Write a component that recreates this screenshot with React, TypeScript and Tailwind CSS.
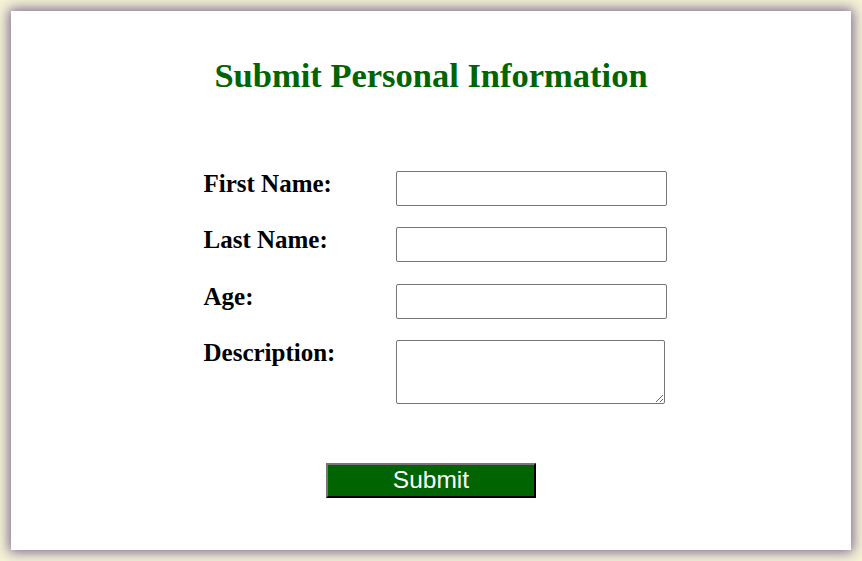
const rows = [
  { id: "first", label: "First Name:" },
  { id: "last", label: "Last Name:" },
  { id: "age", label: "Age:" },
];

export default function App() {
  return (
    <div className="h-[561px] w-full bg-[#f4f4d6] p-[11px]">
      <div className="flex h-full flex-col items-center bg-white shadow-[0_0_12px_2px_rgba(115,90,140,0.95)] font-['Liberation_Serif',serif]">
        <h1 className="mt-[47px] text-[34.5px] font-bold leading-none text-[#006400]">
          Submit Personal Information
        </h1>

        <form className="mt-[78px] flex flex-col items-center" onSubmit={(e) => e.preventDefault()}>
          <div className="grid grid-cols-[192px_271px] gap-y-[21.5px] pl-[8px]">
            {rows.map((r) => (
              <div key={r.id} className="contents">
                <label htmlFor={r.id} className="text-[25px] font-bold leading-none text-black">
                  {r.label}
                </label>
                <input
                  id={r.id}
                  type="text"
                  className="h-[35px] w-[271px] rounded-[2px] border border-[#767676] bg-white"
                />
              </div>
            ))}
            <label htmlFor="desc" className="text-[25px] font-bold leading-none text-black">
              Description:
            </label>
            <textarea
              id="desc"
              className="h-[64px] w-[269px] rounded-[2px] border border-[#767676] bg-white"
            />
          </div>

          <button
            type="submit"
            className="mt-[59px] h-[35px] w-[210px] border-2 border-t-[#767676] border-l-[#767676] border-b-black border-r-black bg-[#006400] font-['Liberation_Sans',sans-serif] text-[24.5px] leading-none text-white"
          >
            Submit
          </button>
        </form>
      </div>
    </div>
  );
}
